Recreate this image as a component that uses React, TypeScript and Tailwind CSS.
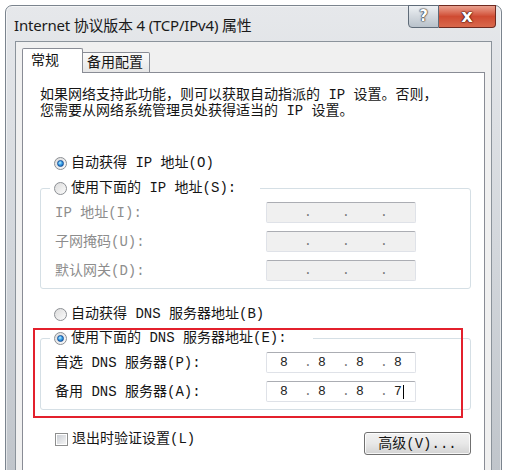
import React from "react";

const body = "font-['Liberation_Mono','Noto_Sans_CJK_SC',monospace] text-[14px] leading-[16px] text-[#151515]";

function Radio({ checked }: { checked?: boolean }) {
  return (
    <span className="flex h-[13px] w-[13px] shrink-0 items-center justify-center rounded-full border border-[#8c8f94] bg-linear-to-br from-[#dcdcdc] to-[#fbfbfb]">
      {checked && (
        <span className="h-[7px] w-[7px] rounded-full border border-[#16509a] bg-[radial-gradient(circle_at_40%_35%,#bdf0ff_0%,#3aa0e8_45%,#0d5aa8_100%)]" />
      )}
    </span>
  );
}

function RadioRow({ checked, label }: { checked?: boolean; label: string }) {
  return (
    <div className="flex h-[16px] items-center gap-[4px] whitespace-nowrap">
      <Radio checked={checked} />
      <span>{label}</span>
    </div>
  );
}

function IpBox({ values, disabled, cursor }: { values: string[]; disabled?: boolean; cursor?: boolean }) {
  return (
    <div
      className={`flex h-[21px] w-[150px] items-center rounded-[2px] border border-[#dfe2e8] border-t-[#abadb3] pl-[13px] text-[13px] ${
        disabled ? "bg-[#f0f0f0] text-[#8a8a8a]" : "bg-white text-[#222]"
      }`}
    >
      {values.map((v, i) => (
        <React.Fragment key={i}>
          {i > 0 && <span className="ml-[16px] w-[8px] text-center text-[#777]">.</span>}
          <span className={`${i > 0 ? "ml-[6px]" : ""} w-[8px] text-center`}>{v}</span>
        </React.Fragment>
      ))}
      {cursor && <span className="ml-[1px] h-[14px] w-px bg-black" />}
    </div>
  );
}

function FieldRow({ label, values, disabled, cursor }: { label: string; values: string[]; disabled?: boolean; cursor?: boolean }) {
  return (
    <div className="grid h-[29px] grid-cols-[211px_150px] items-center">
      <span className={`whitespace-nowrap ${disabled ? "text-[#8d8d8d]" : ""}`}>{label}</span>
      <IpBox values={values} disabled={disabled} cursor={cursor} />
    </div>
  );
}

export default function App() {
  const empty = ["", "", "", ""];
  return (
    <div className="relative h-[470px] w-[505px] overflow-hidden bg-white">
      {/* window frame */}
      <div className="ml-[5px] mt-[5px] h-[480px] w-[497px] rounded-t-[7px] border border-[#7b848e] bg-linear-to-b from-[#e6e8eb] via-[#d3d7dc] to-[#bfc4ca] px-[9px] shadow-[inset_0_0_0_1px_rgba(255,255,255,0.55)]">
        <div className="flex h-[35px] justify-between">
          <span className="mt-[8px] -ml-px whitespace-nowrap font-['Noto_Sans','Noto_Sans_CJK_SC',sans-serif] text-[15px] tracking-[-0.2px] text-[#1a1a1a]">
            Internet 协议版本 4 (TCP/IPv4) 属性
          </span>
          <div className="-mr-[4px] -mt-px flex h-[23px]">
            <div className="flex w-[31px] items-center justify-center rounded-bl-[4px] border border-[#5f6b78] bg-linear-to-b from-[#eef1f4] via-[#d2d8de] to-[#b9c2cb] font-['DejaVu_Sans',sans-serif] text-[15px] font-bold text-white [text-shadow:0_0_1px_#222,0_0_1px_#222,0_0_2px_#444]">
              ?
            </div>
            <div className="flex w-[57px] items-center justify-center rounded-br-[4px] border border-l-0 border-[#6e2a20] bg-linear-to-b from-[#e9a08f] via-[#cf4b32] to-[#d9684c] pb-[2px] font-['DejaVu_Sans',sans-serif] text-[18px] font-bold text-white [text-shadow:0_0_1px_#3a0d05,0_0_1px_#3a0d05,0_0_2px_#3a0d05]">
              x
            </div>
          </div>
        </div>

        {/* client area */}
        <div className={`h-[440px] border border-[#8b939b] bg-[#f0f0f0] px-[6px] pt-[6px] ${body}`}>
          <div className="flex h-[25px] items-end">
            <div className="relative z-10 flex h-[25px] w-[61px] items-center rounded-t-[2px] border border-b-0 border-[#898c95] bg-white pl-[8px] pb-[1px]">
              常规
            </div>
            <div className="flex h-[21px] w-[67px] items-center rounded-tr-[2px] border border-l-0 border-[#898c95] bg-linear-to-b from-[#fbfbfb] to-[#e6e6e6] pl-[4px]">
              备用配置
            </div>
          </div>

          <div className="-mt-px h-[420px] border border-[#898c95] bg-white pl-[17px] pr-[13px] pt-[14px]">
            <p className="whitespace-nowrap">
              如果网络支持此功能，则可以获取自动指派的 IP 设置。否则，
              <br />
              您需要从网络系统管理员处获得适当的 IP 设置。
            </p>

            <div className="mt-[36px] pl-[14px]">
              <RadioRow checked label="自动获得 IP 地址(O)" />
            </div>

            <fieldset className="mt-[9px] rounded-[3px] border border-[#d5dfe5] pb-[3px] pl-[9px]">
              <legend className="pl-[4px] pr-[24px]">
                <RadioRow label="使用下面的 IP 地址(S):" />
              </legend>
              <div className="pl-[5px] pt-[2px]">
                <FieldRow disabled label="IP 地址(I):" values={empty} />
                <FieldRow disabled label="子网掩码(U):" values={empty} />
                <FieldRow disabled label="默认网关(D):" values={empty} />
              </div>
            </fieldset>

            <div className="mt-[17px] pl-[14px]">
              <RadioRow label="自动获得 DNS 服务器地址(B)" />
            </div>

            <fieldset className="mt-[8px] rounded-[3px] border border-[#d5dfe5] pb-[3px] pl-[9px]">
              <legend className="pl-[4px] pr-[26px]">
                <RadioRow checked label="使用下面的 DNS 服务器地址(E):" />
              </legend>
              <div className="pl-[5px] pt-[2px]">
                <FieldRow label="首选 DNS 服务器(P):" values={["8", "8", "8", "8"]} />
                <FieldRow cursor label="备用 DNS 服务器(A):" values={["8", "8", "8", "7"]} />
              </div>
            </fieldset>

            <div className="mt-[21px] flex items-start justify-between pl-[15px]">
              <div className="flex h-[16px] items-center gap-[4px] whitespace-nowrap">
                <span className="flex h-[13px] w-[13px] items-center justify-center border border-[#8e8f8f] bg-white">
                  <span className="h-[9px] w-[9px] bg-linear-to-br from-[#cbcfd5] to-[#f4f4f4]" />
                </span>
                <span>退出时验证设置(L)</span>
              </div>
              <button className="mt-[1px] flex h-[23px] w-[107px] items-center justify-center rounded-[3px] border border-[#707070] bg-linear-to-b from-[#f2f2f2] via-[#e8e8e8] to-[#d3d3d3] shadow-[inset_0_0_0_1px_rgba(255,255,255,0.8)]">
                高级(V)...
              </button>
            </div>
          </div>
        </div>
      </div>

      {/* red highlight */}
      <div className="absolute left-[33px] top-[328px] h-[90px] w-[430px] border-2 border-[#e3202c]" />
    </div>
  );
}
